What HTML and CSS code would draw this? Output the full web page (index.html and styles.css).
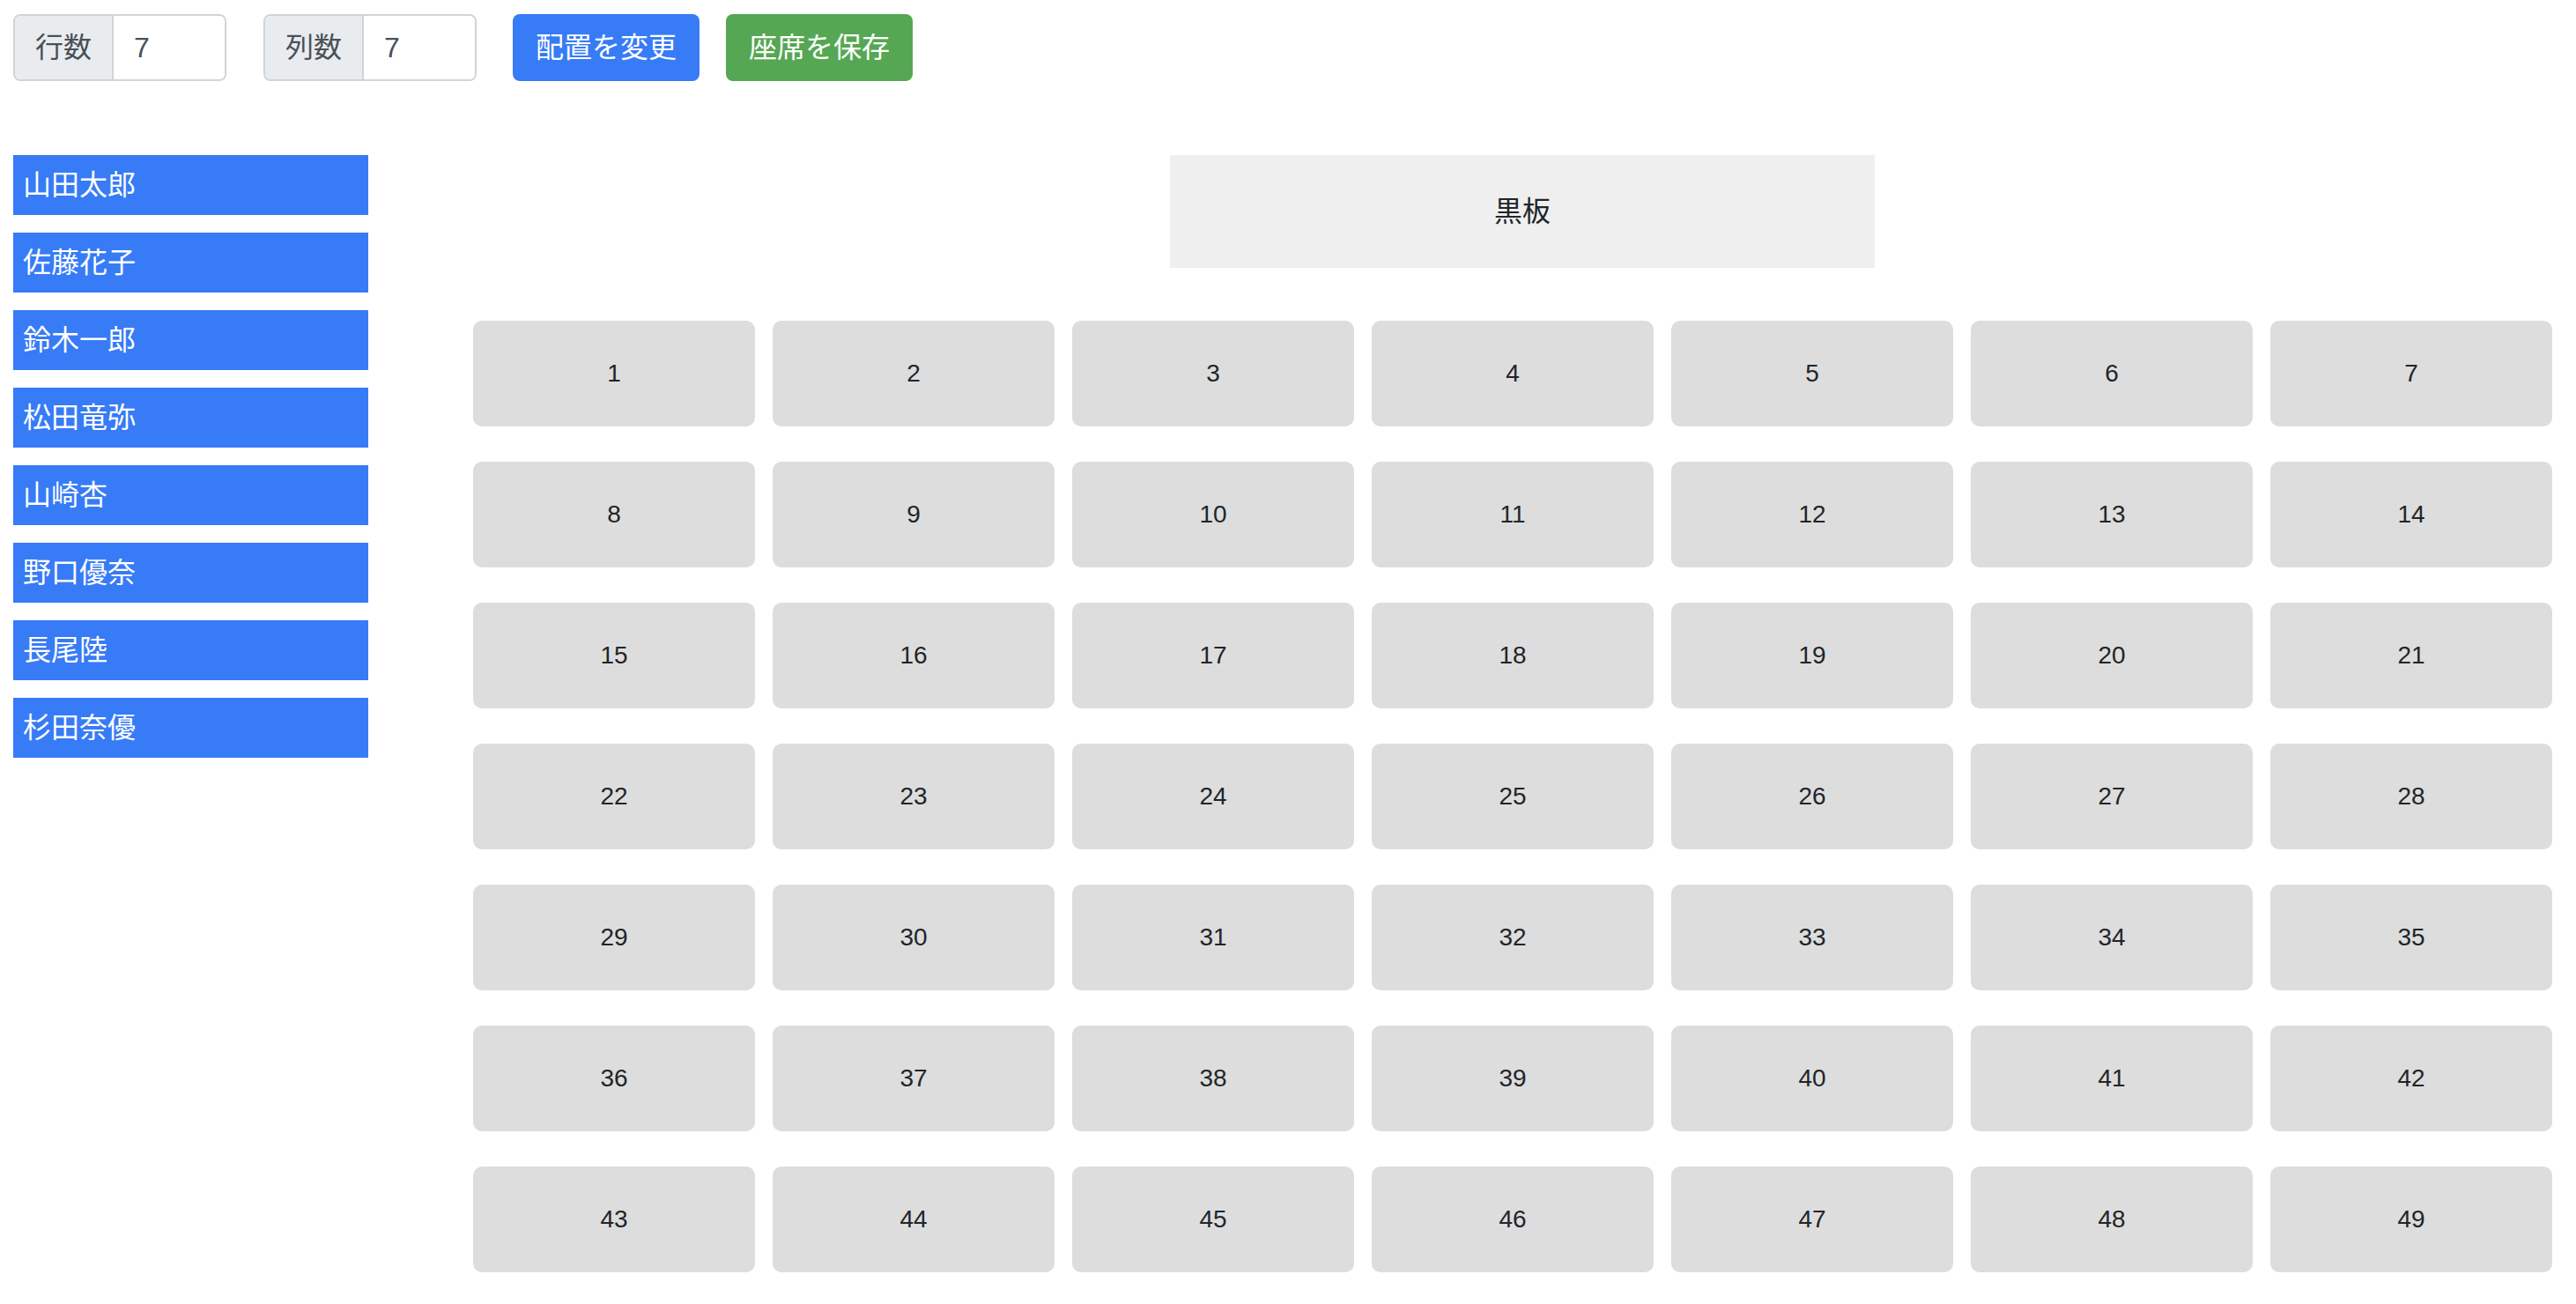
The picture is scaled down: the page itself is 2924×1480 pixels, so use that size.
FILE: index.html
```html
<!DOCTYPE html>
<html lang="ja">
<head>
<meta charset="utf-8">
<title>座席表</title>
<link rel="stylesheet" href="styles.css">
</head>
<body>
<div class="toolbar">
  <div class="group group-rows">
    <span class="addon">行数</span>
    <span class="field">7</span>
  </div>
  <div class="group group-cols">
    <span class="addon">列数</span>
    <span class="field">7</span>
  </div>
  <button class="btn btn-blue">配置を変更</button>
  <button class="btn btn-green">座席を保存</button>
</div>
<div class="main">
  <ul class="students">
    <li class="student">山田太郎</li>
    <li class="student">佐藤花子</li>
    <li class="student">鈴木一郎</li>
    <li class="student">松田竜弥</li>
    <li class="student">山崎杏</li>
    <li class="student">野口優奈</li>
    <li class="student">長尾陸</li>
    <li class="student">杉田奈優</li>
  </ul>
  <div class="room">
    <div class="board">黒板</div>
    <div class="seats">
      <div class="seat">1</div><div class="seat">2</div><div class="seat">3</div><div class="seat">4</div><div class="seat">5</div><div class="seat">6</div><div class="seat">7</div>
      <div class="seat">8</div><div class="seat">9</div><div class="seat">10</div><div class="seat">11</div><div class="seat">12</div><div class="seat">13</div><div class="seat">14</div>
      <div class="seat">15</div><div class="seat">16</div><div class="seat">17</div><div class="seat">18</div><div class="seat">19</div><div class="seat">20</div><div class="seat">21</div>
      <div class="seat">22</div><div class="seat">23</div><div class="seat">24</div><div class="seat">25</div><div class="seat">26</div><div class="seat">27</div><div class="seat">28</div>
      <div class="seat">29</div><div class="seat">30</div><div class="seat">31</div><div class="seat">32</div><div class="seat">33</div><div class="seat">34</div><div class="seat">35</div>
      <div class="seat">36</div><div class="seat">37</div><div class="seat">38</div><div class="seat">39</div><div class="seat">40</div><div class="seat">41</div><div class="seat">42</div>
      <div class="seat">43</div><div class="seat">44</div><div class="seat">45</div><div class="seat">46</div><div class="seat">47</div><div class="seat">48</div><div class="seat">49</div>
    </div>
  </div>
</div>
</body>
</html>
```
FILE: styles.css
```css
* { box-sizing: border-box; }
html, body { background: #ffffff; }
body {
  margin: 0;
  padding: 16px 5px 16px 15px;
  font-family: "Liberation Sans", "Noto Sans CJK JP", sans-serif;
  color: #212529;
}
.toolbar {
  display: flex;
  align-items: center;
  height: 76px;
}
.group {
  display: flex;
  flex-shrink: 0;
  height: 76px;
  border: 2px solid #ced4da;
  border-radius: 8px;
  overflow: hidden;
  font-size: 32px;
  line-height: 48px;
  color: #495057;
}
.group-rows { margin-right: 42px; }
.group-cols { margin-right: 41px; }
.addon {
  width: 112px;
  padding: 12px 0 12px 23px;
  background: #e9ecef;
  border-right: 2px solid #ced4da;
}
.field {
  width: 126px;
  padding: 12px 0 12px 23px;
  background: #ffffff;
}
.btn {
  flex-shrink: 0;
  height: 76px;
  width: 212px;
  border: none;
  border-radius: 8px;
  font-family: "Liberation Sans", "Noto Sans CJK JP", sans-serif;
  font-size: 32px;
  line-height: 48px;
  color: #ffffff;
  padding: 0;
  margin: 0 30px 0 0;
}
.btn-blue { background: #377bf6; }
.btn-green { background: #55a753; }
.main {
  display: flex;
  align-items: flex-start;
  margin-top: 84px;
}
.students {
  flex-shrink: 0;
  list-style: none;
  margin: 0;
  padding: 0;
  width: 403px;
}
.student {
  height: 68px;
  margin-bottom: 20px;
  padding: 10px 11px;
  background: #377bf6;
  color: #ffffff;
  font-size: 32px;
  line-height: 48px;
}
.room {
  flex-shrink: 0;
  margin-left: 119px;
  width: 2382px;
}
.board {
  width: 800px;
  height: 128px;
  margin: 0 auto;
  background: #efefef;
  font-size: 32px;
  line-height: 128px;
  text-align: center;
  color: #212529;
}
.seats {
  display: grid;
  grid-template-columns: repeat(7, 320px);
  column-gap: 20px;
  row-gap: 40px;
  margin-top: 60px;
}
.seat {
  height: 120px;
  background: #dddddd;
  border-radius: 10px;
  display: flex;
  align-items: center;
  justify-content: center;
  font-size: 28px;
  color: #212529;
}
```
